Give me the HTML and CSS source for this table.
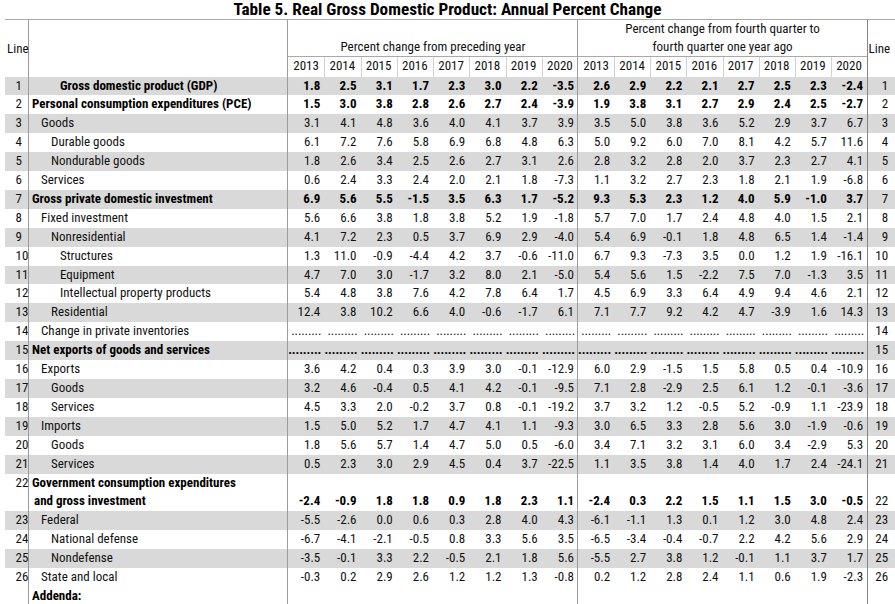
FILE: index.html
```html
<!DOCTYPE html>
<html>
<head>
<meta charset="utf-8">
<title>Table 5</title>
<link rel="stylesheet" href="styles.css">
</head>
<body>
<div class="title">Table 5. Real Gross Domestic Product: Annual Percent Change</div>
<table>
<colgroup>
<col class="c-ln"><col class="c-lbl">
<col class="c-a"><col class="c-a"><col class="c-a"><col class="c-a"><col class="c-a"><col class="c-a"><col class="c-a"><col class="c-a">
<col class="c-b"><col class="c-b"><col class="c-b"><col class="c-b"><col class="c-b"><col class="c-b"><col class="c-b"><col class="c-b">
<col class="c-rn">
</colgroup>
<thead>
<tr class="ha">
<th class="hl" rowspan="2">Line</th>
<th class="hlab" rowspan="2"></th>
<th class="hg1" colspan="8">Percent change from preceding year</th>
<th class="hg2" colspan="8">Percent change from fourth quarter to<br>fourth quarter one year ago</th>
<th class="hr" rowspan="2">Line</th>
</tr>
<tr class="hb">
<th class="y">2013</th><th class="y">2014</th><th class="y">2015</th><th class="y">2016</th><th class="y">2017</th><th class="y">2018</th><th class="y">2019</th><th class="y ye">2020</th>
<th class="y">2013</th><th class="y">2014</th><th class="y">2015</th><th class="y">2016</th><th class="y">2017</th><th class="y">2018</th><th class="y">2019</th><th class="y">2020</th>
</tr>
</thead>
<tbody>
<tr class="g b"><td>1</td><td class="gdp">Gross domestic product (GDP)</td><td>1.8</td><td>2.5</td><td>3.1</td><td>1.7</td><td>2.3</td><td>3.0</td><td>2.2</td><td>-3.5</td><td>2.6</td><td>2.9</td><td>2.2</td><td>2.1</td><td>2.7</td><td>2.5</td><td>2.3</td><td>-2.4</td><td>1</td></tr>
<tr class="b"><td>2</td><td class="l0">Personal consumption expenditures (PCE)</td><td>1.5</td><td>3.0</td><td>3.8</td><td>2.8</td><td>2.6</td><td>2.7</td><td>2.4</td><td>-3.9</td><td>1.9</td><td>3.8</td><td>3.1</td><td>2.7</td><td>2.9</td><td>2.4</td><td>2.5</td><td>-2.7</td><td>2</td></tr>
<tr class="g"><td>3</td><td class="l1">Goods</td><td>3.1</td><td>4.1</td><td>4.8</td><td>3.6</td><td>4.0</td><td>4.1</td><td>3.7</td><td>3.9</td><td>3.5</td><td>5.0</td><td>3.8</td><td>3.6</td><td>5.2</td><td>2.9</td><td>3.7</td><td>6.7</td><td>3</td></tr>
<tr><td>4</td><td class="l2">Durable goods</td><td>6.1</td><td>7.2</td><td>7.6</td><td>5.8</td><td>6.9</td><td>6.8</td><td>4.8</td><td>6.3</td><td>5.0</td><td>9.2</td><td>6.0</td><td>7.0</td><td>8.1</td><td>4.2</td><td>5.7</td><td>11.6</td><td>4</td></tr>
<tr class="g"><td>5</td><td class="l2">Nondurable goods</td><td>1.8</td><td>2.6</td><td>3.4</td><td>2.5</td><td>2.6</td><td>2.7</td><td>3.1</td><td>2.6</td><td>2.8</td><td>3.2</td><td>2.8</td><td>2.0</td><td>3.7</td><td>2.3</td><td>2.7</td><td>4.1</td><td>5</td></tr>
<tr><td>6</td><td class="l1">Services</td><td>0.6</td><td>2.4</td><td>3.3</td><td>2.4</td><td>2.0</td><td>2.1</td><td>1.8</td><td>-7.3</td><td>1.1</td><td>3.2</td><td>2.7</td><td>2.3</td><td>1.8</td><td>2.1</td><td>1.9</td><td>-6.8</td><td>6</td></tr>
<tr class="g b"><td>7</td><td class="l0">Gross private domestic investment</td><td>6.9</td><td>5.6</td><td>5.5</td><td>-1.5</td><td>3.5</td><td>6.3</td><td>1.7</td><td>-5.2</td><td>9.3</td><td>5.3</td><td>2.3</td><td>1.2</td><td>4.0</td><td>5.9</td><td>-1.0</td><td>3.7</td><td>7</td></tr>
<tr><td>8</td><td class="l1">Fixed investment</td><td>5.6</td><td>6.6</td><td>3.8</td><td>1.8</td><td>3.8</td><td>5.2</td><td>1.9</td><td>-1.8</td><td>5.7</td><td>7.0</td><td>1.7</td><td>2.4</td><td>4.8</td><td>4.0</td><td>1.5</td><td>2.1</td><td>8</td></tr>
<tr class="g"><td>9</td><td class="l2">Nonresidential</td><td>4.1</td><td>7.2</td><td>2.3</td><td>0.5</td><td>3.7</td><td>6.9</td><td>2.9</td><td>-4.0</td><td>5.4</td><td>6.9</td><td>-0.1</td><td>1.8</td><td>4.8</td><td>6.5</td><td>1.4</td><td>-1.4</td><td>9</td></tr>
<tr><td>10</td><td class="l3">Structures</td><td>1.3</td><td>11.0</td><td>-0.9</td><td>-4.4</td><td>4.2</td><td>3.7</td><td>-0.6</td><td>-11.0</td><td>6.7</td><td>9.3</td><td>-7.3</td><td>3.5</td><td>0.0</td><td>1.2</td><td>1.9</td><td>-16.1</td><td>10</td></tr>
<tr class="g"><td>11</td><td class="l3">Equipment</td><td>4.7</td><td>7.0</td><td>3.0</td><td>-1.7</td><td>3.2</td><td>8.0</td><td>2.1</td><td>-5.0</td><td>5.4</td><td>5.6</td><td>1.5</td><td>-2.2</td><td>7.5</td><td>7.0</td><td>-1.3</td><td>3.5</td><td>11</td></tr>
<tr><td>12</td><td class="l3">Intellectual property products</td><td>5.4</td><td>4.8</td><td>3.8</td><td>7.6</td><td>4.2</td><td>7.8</td><td>6.4</td><td>1.7</td><td>4.5</td><td>6.9</td><td>3.3</td><td>6.4</td><td>4.9</td><td>9.4</td><td>4.6</td><td>2.1</td><td>12</td></tr>
<tr class="g"><td>13</td><td class="l2">Residential</td><td>12.4</td><td>3.8</td><td>10.2</td><td>6.6</td><td>4.0</td><td>-0.6</td><td>-1.7</td><td>6.1</td><td>7.1</td><td>7.7</td><td>9.2</td><td>4.2</td><td>4.7</td><td>-3.9</td><td>1.6</td><td>14.3</td><td>13</td></tr>
<tr class="dots"><td>14</td><td class="l1">Change in private inventories</td><td>.........</td><td>.........</td><td>.........</td><td>.........</td><td>.........</td><td>.........</td><td>.........</td><td>.........</td><td>.........</td><td>.........</td><td>.........</td><td>.........</td><td>.........</td><td>.........</td><td>.........</td><td>.........</td><td>14</td></tr>
<tr class="g b dots"><td>15</td><td class="l0">Net exports of goods and services</td><td>.........</td><td>.........</td><td>.........</td><td>.........</td><td>.........</td><td>.........</td><td>.........</td><td>.........</td><td>.........</td><td>.........</td><td>.........</td><td>.........</td><td>.........</td><td>.........</td><td>.........</td><td>.........</td><td>15</td></tr>
<tr><td>16</td><td class="l1">Exports</td><td>3.6</td><td>4.2</td><td>0.4</td><td>0.3</td><td>3.9</td><td>3.0</td><td>-0.1</td><td>-12.9</td><td>6.0</td><td>2.9</td><td>-1.5</td><td>1.5</td><td>5.8</td><td>0.5</td><td>0.4</td><td>-10.9</td><td>16</td></tr>
<tr class="g"><td>17</td><td class="l2">Goods</td><td>3.2</td><td>4.6</td><td>-0.4</td><td>0.5</td><td>4.1</td><td>4.2</td><td>-0.1</td><td>-9.5</td><td>7.1</td><td>2.8</td><td>-2.9</td><td>2.5</td><td>6.1</td><td>1.2</td><td>-0.1</td><td>-3.6</td><td>17</td></tr>
<tr><td>18</td><td class="l2">Services</td><td>4.5</td><td>3.3</td><td>2.0</td><td>-0.2</td><td>3.7</td><td>0.8</td><td>-0.1</td><td>-19.2</td><td>3.7</td><td>3.2</td><td>1.2</td><td>-0.5</td><td>5.2</td><td>-0.9</td><td>1.1</td><td>-23.9</td><td>18</td></tr>
<tr class="g"><td>19</td><td class="l1">Imports</td><td>1.5</td><td>5.0</td><td>5.2</td><td>1.7</td><td>4.7</td><td>4.1</td><td>1.1</td><td>-9.3</td><td>3.0</td><td>6.5</td><td>3.3</td><td>2.8</td><td>5.6</td><td>3.0</td><td>-1.9</td><td>-0.6</td><td>19</td></tr>
<tr><td>20</td><td class="l2">Goods</td><td>1.8</td><td>5.6</td><td>5.7</td><td>1.4</td><td>4.7</td><td>5.0</td><td>0.5</td><td>-6.0</td><td>3.4</td><td>7.1</td><td>3.2</td><td>3.1</td><td>6.0</td><td>3.4</td><td>-2.9</td><td>5.3</td><td>20</td></tr>
<tr class="g"><td>21</td><td class="l2">Services</td><td>0.5</td><td>2.3</td><td>3.0</td><td>2.9</td><td>4.5</td><td>0.4</td><td>3.7</td><td>-22.5</td><td>1.1</td><td>3.5</td><td>3.8</td><td>1.4</td><td>4.0</td><td>1.7</td><td>2.4</td><td>-24.1</td><td>21</td></tr>
<tr class="b dbl"><td>22</td><td class="l0">Government consumption expenditures<br><span class="cont">and gross investment</span></td><td>-2.4</td><td>-0.9</td><td>1.8</td><td>1.8</td><td>0.9</td><td>1.8</td><td>2.3</td><td>1.1</td><td>-2.4</td><td>0.3</td><td>2.2</td><td>1.5</td><td>1.1</td><td>1.5</td><td>3.0</td><td>-0.5</td><td>22</td></tr>
<tr class="g"><td>23</td><td class="l1">Federal</td><td>-5.5</td><td>-2.6</td><td>0.0</td><td>0.6</td><td>0.3</td><td>2.8</td><td>4.0</td><td>4.3</td><td>-6.1</td><td>-1.1</td><td>1.3</td><td>0.1</td><td>1.2</td><td>3.0</td><td>4.8</td><td>2.4</td><td>23</td></tr>
<tr><td>24</td><td class="l2">National defense</td><td>-6.7</td><td>-4.1</td><td>-2.1</td><td>-0.5</td><td>0.8</td><td>3.3</td><td>5.6</td><td>3.5</td><td>-6.5</td><td>-3.4</td><td>-0.4</td><td>-0.7</td><td>2.2</td><td>4.2</td><td>5.6</td><td>2.9</td><td>24</td></tr>
<tr class="g"><td>25</td><td class="l2">Nondefense</td><td>-3.5</td><td>-0.1</td><td>3.3</td><td>2.2</td><td>-0.5</td><td>2.1</td><td>1.8</td><td>5.6</td><td>-5.5</td><td>2.7</td><td>3.8</td><td>1.2</td><td>-0.1</td><td>1.1</td><td>3.7</td><td>1.7</td><td>25</td></tr>
<tr><td>26</td><td class="l1">State and local</td><td>-0.3</td><td>0.2</td><td>2.9</td><td>2.6</td><td>1.2</td><td>1.2</td><td>1.3</td><td>-0.8</td><td>0.2</td><td>1.2</td><td>2.8</td><td>2.4</td><td>1.1</td><td>0.6</td><td>1.9</td><td>-2.3</td><td>26</td></tr>
<tr class="b"><td></td><td class="l0">Addenda:</td><td></td><td></td><td></td><td></td><td></td><td></td><td></td><td></td><td></td><td></td><td></td><td></td><td></td><td></td><td></td><td></td><td></td></tr>
</tbody>
</table>
</body>
</html>
```

FILE: styles.css
```css
* { box-sizing: border-box; }

body {
  margin: 0;
  background: #ffffff;
  font-family: "Roboto Condensed", "Roboto", "Liberation Sans", sans-serif;
  font-stretch: 75%;
  font-size: 13px;
  color: #111111;
  overflow: hidden;
}

.title {
  height: 19px;
  line-height: 18px;
  text-align: center;
  font-weight: bold;
  font-size: 17.2px;
  color: #000;
}

table {
  border-collapse: separate;
  border-spacing: 0;
  table-layout: fixed;
  width: 890px;
  margin-left: 5px;
  border-top: 1px solid #a9a9a9;
}

.c-ln { width: 24px; }
.c-lbl { width: 259px; }
.c-a { width: 36.25px; }
.c-b { width: 36.125px; }
.c-rn { width: 28px; }

th {
  font-weight: normal;
  padding: 0;
  white-space: nowrap;
}

.ha { height: 35px; }
.hb { height: 20.5px; }

.hl {
  text-align: left;
  padding-left: 2px;
  vertical-align: middle;
  box-shadow: inset -1px 0 #9b9b9b;
}
.hlab { box-shadow: inset -1px 0 #9b9b9b; }

.hg1, .hg2 {
  vertical-align: bottom;
  line-height: 18px;
  text-align: center;
}
.hg1 { box-shadow: inset -1px 0 #9b9b9b; }

.hr {
  text-align: right;
  padding-right: 5px;
  vertical-align: middle;
  box-shadow: inset 1px 0 #858585;
}

.y {
  text-align: center;
  line-height: 20px;
  box-shadow: inset 0 1px #a9a9a9, inset 1px 0 #d2d2d2;
}
.hb .y:first-child { box-shadow: inset 0 1px #a9a9a9; }
.y.ye { box-shadow: inset 0 1px #a9a9a9, inset 1px 0 #d2d2d2, inset -1px 0 #9b9b9b; }
.ye + .y { box-shadow: inset 0 1px #a9a9a9; }

td {
  height: 18.9px;
  line-height: 18.9px;
  padding: 0 4px 0 0;
  text-align: right;
  white-space: nowrap;
  vertical-align: middle;
}

td:first-child {
  text-align: left;
  padding: 0 0 0 10.5px;
  box-shadow: inset -1px 0 #9b9b9b;
}

td:nth-child(2) {
  text-align: left;
  padding-right: 0;
  box-shadow: inset -1px 0 #9b9b9b;
}

td:nth-child(10) { box-shadow: inset -1px 0 #9b9b9b; }

td:last-child {
  padding-right: 7px;
  box-shadow: inset 1px 0 #858585;
}

.l0 { padding-left: 3px; }
.l1 { padding-left: 12px; }
.l2 { padding-left: 22px; }
.l3 { padding-left: 31px; }
.gdp { padding-left: 31px; }

tr.dots td:not(:first-child):not(:nth-child(2)):not(:last-child) {
  padding-right: 3px;
  letter-spacing: -0.1px;
}

tr.g td { background: #d9d9d9; }

tr.b td:not(:first-child):not(:last-child) {
  font-weight: bold;
  color: #000;
}

tr.dbl td { height: 37.8px; vertical-align: bottom; }
tr.dbl td:first-child { vertical-align: top; }
.cont { padding-left: 2px; }
```
